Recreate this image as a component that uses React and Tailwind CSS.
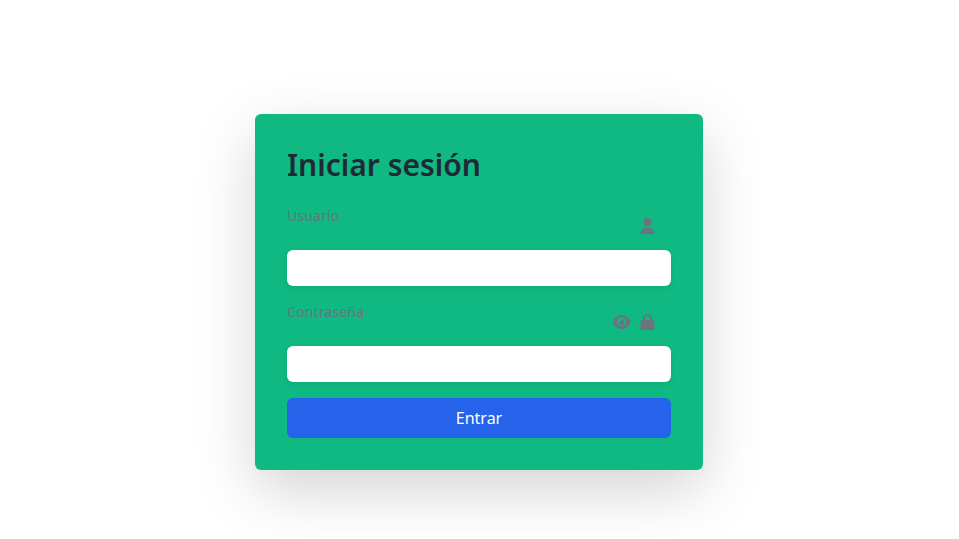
import { FaEye, FaLock, FaUser } from "react-icons/fa6";

function Field({ id, label, type, children }) {
  return (
    <div className="flex flex-col">
      <div className="flex h-11 items-start justify-between pr-4">
        <label htmlFor={id} className="text-sm tracking-[0.17px] text-[#6b7280]">
          {label}
        </label>
        <div className="flex gap-[9px] pt-3 text-base text-[#6b7280]">{children}</div>
      </div>
      <input
        id={id}
        type={type}
        className="h-9 w-full rounded-md bg-white px-3 shadow-[0_2px_5px_rgba(0,0,0,0.08)] outline-none"
      />
    </div>
  );
}

export default function App() {
  return (
    <main className="flex h-[539px] justify-center overflow-hidden bg-white pt-[114px] font-['Noto_Sans',sans-serif]">
      <form className="mr-px flex h-[356px] w-[448px] flex-col gap-4 rounded-md bg-[#10b981] p-8 shadow-[0_20px_60px_rgba(0,0,0,0.175)]">
        <h1 className="mb-[7px] pt-px text-3xl font-semibold text-[#1f2937]">Iniciar sesión</h1>
        <Field id="usuario" label="Usuario" type="text">
          <FaUser className="h-4 w-[15px]" />
        </Field>
        <Field id="contrasena" label="Contraseña" type="password">
          <FaEye className="h-4 w-[19px]" />
          <FaLock className="h-4 w-[15px]" />
        </Field>
        <button type="button" className="h-10 w-full rounded-md bg-[#2563eb] text-base text-white">
          Entrar
        </button>
      </form>
    </main>
  );
}
